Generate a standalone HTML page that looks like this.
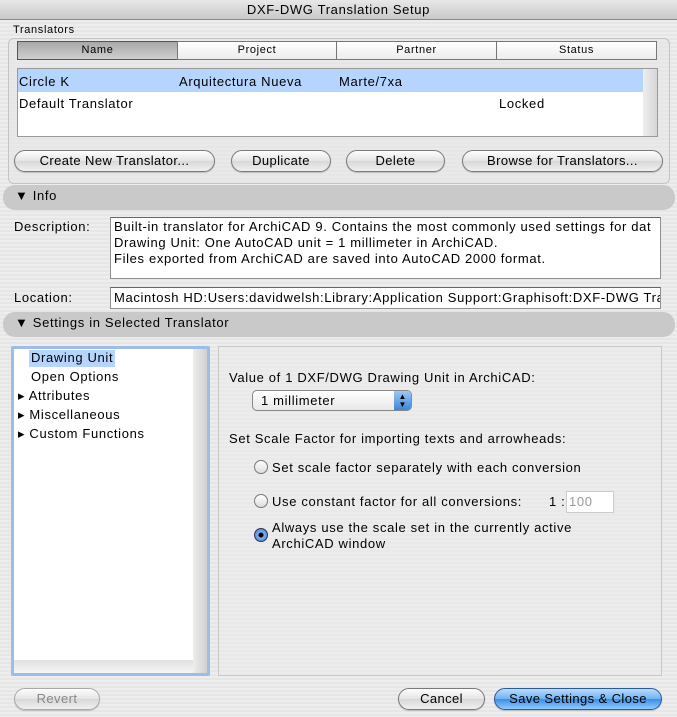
<!DOCTYPE html>
<html><head><meta charset="utf-8"><style>
*{box-sizing:border-box;margin:0;padding:0}
body{width:677px;height:717px;overflow:hidden;font-family:"Liberation Sans",sans-serif;font-size:13px;color:#000;letter-spacing:0.65px;
background:repeating-linear-gradient(#ededed 0 2px,#e6e6e6 2px 4px);position:relative}
.a{position:absolute;white-space:nowrap}
.title{left:0;top:0;width:677px;height:20px;background:linear-gradient(#e8e8e8,#c9c9c9);border-bottom:1px solid #8a8a8a;text-align:center;line-height:20px;font-size:13px}
.grp{left:8px;top:38px;width:662px;height:146px;border:1px solid #c4c4c4;border-radius:6px;background:rgba(230,230,230,.5)}
.hd{top:41px;height:19px;border:1px solid #777;background:linear-gradient(#fff,#ececec);text-align:center;font-size:11px;line-height:17px}
.btn{height:22px;border:1px solid #7a7a7a;border-radius:11px;background:linear-gradient(#fdfdfd,#e4e4e4 50%,#d8d8d8 51%,#f0f0f0);text-align:center;line-height:20px;font-size:13px;box-shadow:0 1px 1px rgba(0,0,0,.2);letter-spacing:0.4px}
.bar{left:3px;width:672px;height:25px;border-radius:12px;background:#c9c9c9;line-height:22px;padding-left:12px;font-size:13px}
.field{background:#fff;border:1px solid #8f8f8f;border-top-color:#666;padding-left:3px}
.radio{width:14px;height:14px;border-radius:50%;border:1px solid #777;background:linear-gradient(#fff,#ddd)}
</style></head><body>
<div class="a title">DXF-DWG Translation Setup</div>
<div class="a" style="left:13px;top:24px;font-size:11px">Translators</div>
<div class="a grp"></div>
<div class="a hd" style="left:17px;width:161px;background:linear-gradient(#a8a8a8,#cfcfcf);border-color:#555">Name</div>
<div class="a hd" style="left:177px;width:160px">Project</div>
<div class="a hd" style="left:336px;width:161px">Partner</div>
<div class="a hd" style="left:496px;width:161px">Status</div>
<div class="a" style="left:17px;top:68px;width:641px;height:69px;background:#fff;border:1px solid #999"></div>
<div class="a" style="left:18px;top:69px;width:625px;height:23px;background:#b5d5ff"></div>
<div class="a" style="left:643px;top:69px;width:14px;height:67px;background:linear-gradient(90deg,#eee,#d6d6d6)"></div>
<div class="a" style="left:19px;top:74px">Circle K</div>
<div class="a" style="left:179px;top:74px">Arquitectura Nueva</div>
<div class="a" style="left:339px;top:74px">Marte/7xa</div>
<div class="a" style="left:19px;top:96px">Default Translator</div>
<div class="a" style="left:499px;top:96px">Locked</div>
<div class="a btn" style="left:14px;top:150px;width:201px">Create New Translator...</div>
<div class="a btn" style="left:231px;top:150px;width:100px">Duplicate</div>
<div class="a btn" style="left:346px;top:150px;width:99px">Delete</div>
<div class="a btn" style="left:462px;top:150px;width:201px">Browse for Translators...</div>
<div class="a bar" style="top:185px">▼ Info</div>
<div class="a" style="left:14px;top:219px">Description:</div>
<div class="a field" style="left:110px;top:217px;width:551px;height:62px;line-height:16px;padding-top:1px;overflow:hidden">Built-in translator for ArchiCAD 9. Contains the most commonly used settings for dat<br>Drawing Unit: One AutoCAD unit = 1 millimeter in ArchiCAD.<br>Files exported from ArchiCAD are saved into AutoCAD 2000 format.</div>
<div class="a" style="left:14px;top:290px">Location:</div>
<div class="a field" style="left:110px;top:287px;width:551px;height:22px;line-height:20px;overflow:hidden">Macintosh HD:Users:davidwelsh:Library:Application Support:Graphisoft:DXF-DWG Tran</div>
<div class="a bar" style="top:312px">▼ Settings in Selected Translator</div>
<div class="a" style="left:11px;top:346px;width:199px;height:330px;border:3px solid #9cbde6;border-radius:2px;background:#fff"></div>
<div class="a" style="left:193px;top:349px;width:14px;height:324px;background:linear-gradient(90deg,#eee,#d0d0d0)"></div>
<div class="a" style="left:14px;top:660px;width:179px;height:13px;background:linear-gradient(#e0e0e0,#f6f6f6)"></div>
<div class="a" style="left:29px;top:350px;background:#b5d5ff;padding:0 2px;height:17px;line-height:16px">Drawing Unit</div>
<div class="a" style="left:31px;top:369px">Open Options</div>
<div class="a" style="left:18px;top:388px">▸ Attributes</div>
<div class="a" style="left:18px;top:407px">▸ Miscellaneous</div>
<div class="a" style="left:18px;top:426px">▸ Custom Functions</div>
<div class="a" style="left:218px;top:346px;width:444px;height:330px;border:1px solid #c8c8c8;background:rgba(235,235,235,.6)"></div>
<div class="a" style="left:229px;top:370px">Value of 1 DXF/DWG Drawing Unit in ArchiCAD:</div>
<div class="a" style="left:252px;top:390px;width:160px;height:21px;border:1px solid #888;border-radius:5px;background:linear-gradient(#fff,#e8e8e8);line-height:19px;padding-left:8px">1 millimeter</div>
<div class="a" style="left:394px;top:391px;width:17px;height:19px;border-radius:0 4px 4px 0;background:linear-gradient(#9cc8f5,#3a86db);color:#000;font-size:8px;line-height:8px;text-align:center;padding-top:2px;letter-spacing:0">▲<br>▼</div>
<div class="a" style="left:229px;top:431px">Set Scale Factor for importing texts and arrowheads:</div>
<div class="a radio" style="left:254px;top:460px"></div>
<div class="a" style="left:272px;top:460px">Set scale factor separately with each conversion</div>
<div class="a radio" style="left:254px;top:494px"></div>
<div class="a" style="left:272px;top:494px">Use constant factor for all conversions:</div>
<div class="a" style="left:549px;top:494px">1 :</div>
<div class="a" style="left:566px;top:491px;width:48px;height:22px;background:#fff;border:1px solid #ccc;color:#999;line-height:20px;padding-left:2px">100</div>
<div class="a radio" style="left:254px;top:528px;background:radial-gradient(circle,#000 0 2px,#7fb3ee 3px,#2f6fc9);border-color:#335"></div>
<div class="a" style="left:272px;top:520px;line-height:16px">Always use the scale set in the currently active<br>ArchiCAD window</div>
<div class="a btn" style="left:14px;top:688px;width:86px;color:#888;border-color:#aaa">Revert</div>
<div class="a btn" style="left:398px;top:688px;width:87px">Cancel</div>
<div class="a btn" style="left:494px;top:688px;width:168px;background:linear-gradient(#b9dcff,#6fb2f3 50%,#3d8ee6 51%,#8fcbff);border-color:#2a5a9a">Save Settings &amp; Close</div>
</body></html>
